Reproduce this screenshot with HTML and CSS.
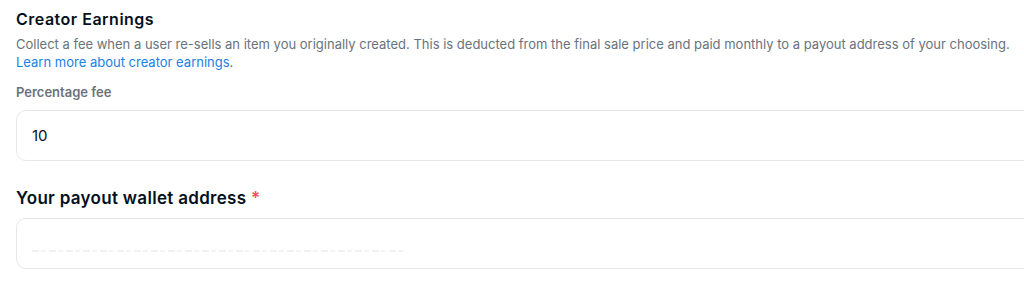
FILE: index.html
```html
<!DOCTYPE html>
<html lang="en">
<head>
<meta charset="utf-8">
<title>Creator Earnings</title>
<link rel="stylesheet" href="styles.css">
</head>
<body>
<main class="form">
  <section class="section">
    <h2 class="section-title">Creator Earnings</h2>
    <p class="section-desc">Collect a fee when a user re-sells an item you originally created. This is deducted from the final sale price and paid monthly to a payout address of your choosing.<br><a class="link" href="#">Learn more about creator earnings</a>.</p>
    <label class="field-label" for="fee">Percentage fee</label>
    <div class="input-box">
      <input id="fee" class="input" type="text" value="10">
    </div>
  </section>
  <section class="section section-wallet">
    <h3 class="wallet-title">Your payout wallet address <span class="req">*</span></h3>
    <div class="input-box">
      <div class="ghost" aria-hidden="true"></div>
    </div>
  </section>
</main>
</body>
</html>
```
FILE: styles.css
```css
html, body {
  margin: 0;
  padding: 0;
  background: #ffffff;
  overflow: hidden;
}
body {
  font-family: "Inter", "Noto Sans", sans-serif;
  color: #04111d;
}
.form {
  width: 1040px;
  padding: 7px 0 0 16px;
}
.section-title {
  margin: 0;
  font-size: 16px;
  line-height: 24px;
  font-weight: 600;
  letter-spacing: 0.5px;
  color: #04111d;
}
.section-desc {
  margin: 4px 0 0;
  font-size: 13px;
  line-height: 18px;
  color: #6a737c;
}
.link {
  color: #2081e2;
  text-decoration: none;
}
.field-label {
  display: block;
  margin-top: 12px;
  font-size: 13px;
  line-height: 18px;
  font-weight: 600;
  color: #6a737c;
}
.input-box {
  margin-top: 9px;
  height: 49px;
  border: 1px solid #e5e8eb;
  border-radius: 10px;
  display: flex;
  align-items: center;
  padding: 0 15px;
}
.input {
  border: 0;
  outline: none;
  padding: 0;
  font-family: inherit;
  font-size: 15px;
  color: #04111d;
  width: 100%;
  background: transparent;
}
.section-wallet {
  margin-top: 25px;
}
.wallet-title {
  margin: 0;
  font-size: 17px;
  line-height: 24px;
  font-weight: 600;
  letter-spacing: 0.3px;
  color: #04111d;
}
.req {
  color: #eb5757;
}
.section-wallet .input-box {
  margin-top: 8px;
  align-items: flex-start;
}
.ghost {
  margin-top: 31px;
  width: 372px;
  height: 2px;
  background: repeating-linear-gradient(90deg, #f1f1f1 0 7px, transparent 7px 9px, #f4f4f4 9px 14px, transparent 14px 17px);
}
```
